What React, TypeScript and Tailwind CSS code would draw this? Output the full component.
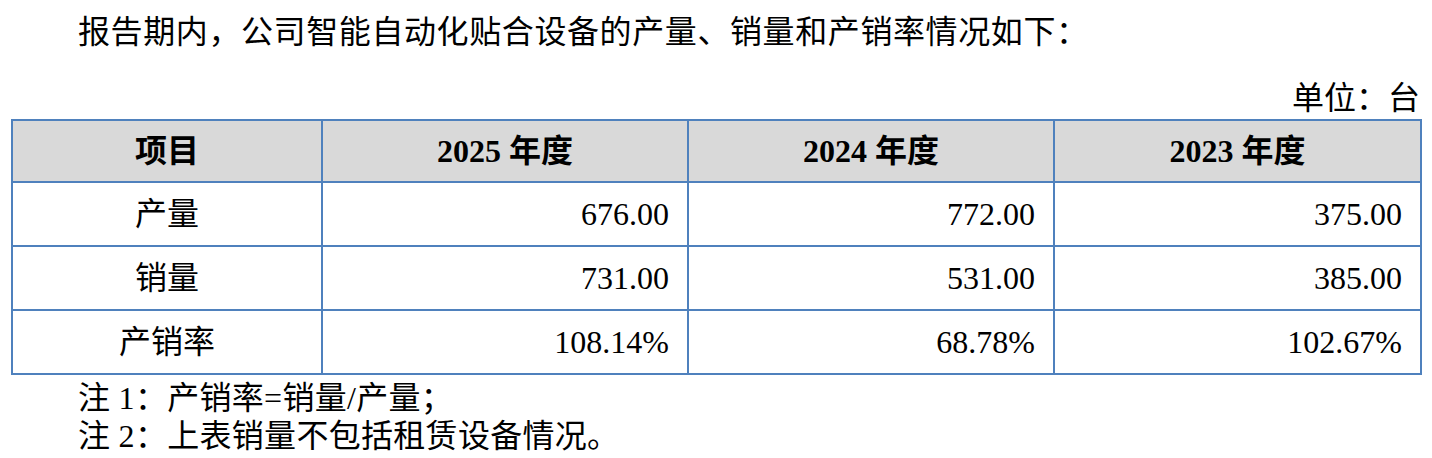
import React from "react";

const rows = [
  { name: "产量", v: ["676.00", "772.00", "375.00"] },
  { name: "销量", v: ["731.00", "531.00", "385.00"] },
  { name: "产销率", v: ["108.14%", "68.78%", "102.67%"] },
];

export default function App() {
  return (
    <div className="w-[1432px] h-[458px] bg-white text-black pl-[11px] pr-[12px] overflow-hidden font-['Liberation_Serif','Noto_Sans_CJK_SC',serif]">
      <p className="mt-[12px] pl-[67px] text-[32px] leading-[40px] tracking-[0.6px] whitespace-nowrap">
        报告期内，公司智能自动化贴合设备的产量、销量和产销率情况如下：
      </p>
      <p className="mt-[26px] text-right text-[32px] leading-[40px]">单位：台</p>
      <table className="mt-[1px] w-[1409px] table-fixed border-collapse text-[32px]">
        <colgroup>
          <col className="w-[310px]" />
          <col className="w-[366px]" />
          <col className="w-[366px]" />
          <col className="w-[367px]" />
        </colgroup>
        <thead>
          <tr className="h-[62px] bg-[#d9d9d9]">
            {["项目", "2025 年度", "2024 年度", "2023 年度"].map((h) => (
              <th
                key={h}
                className="border-2 border-[#4f81bd] text-center font-bold leading-[40px] p-0"
              >
                {h}
              </th>
            ))}
          </tr>
        </thead>
        <tbody>
          {rows.map((r) => (
            <tr key={r.name} className="h-[64px]">
              <td className="border-2 border-[#4f81bd] text-center leading-[40px] p-0">
                {r.name}
              </td>
              {r.v.map((x, i) => (
                <td
                  key={i}
                  className="border-2 border-[#4f81bd] text-right pr-[18px] leading-[40px] p-0"
                >
                  {x}
                </td>
              ))}
            </tr>
          ))}
        </tbody>
      </table>
      <div className="mt-[4px] pl-[67px] text-[32px] leading-[38px] tracking-[0.3px] whitespace-nowrap">
        <p>注 1：产销率=销量/产量；</p>
        <p>注 2：上表销量不包括租赁设备情况。</p>
      </div>
    </div>
  );
}
